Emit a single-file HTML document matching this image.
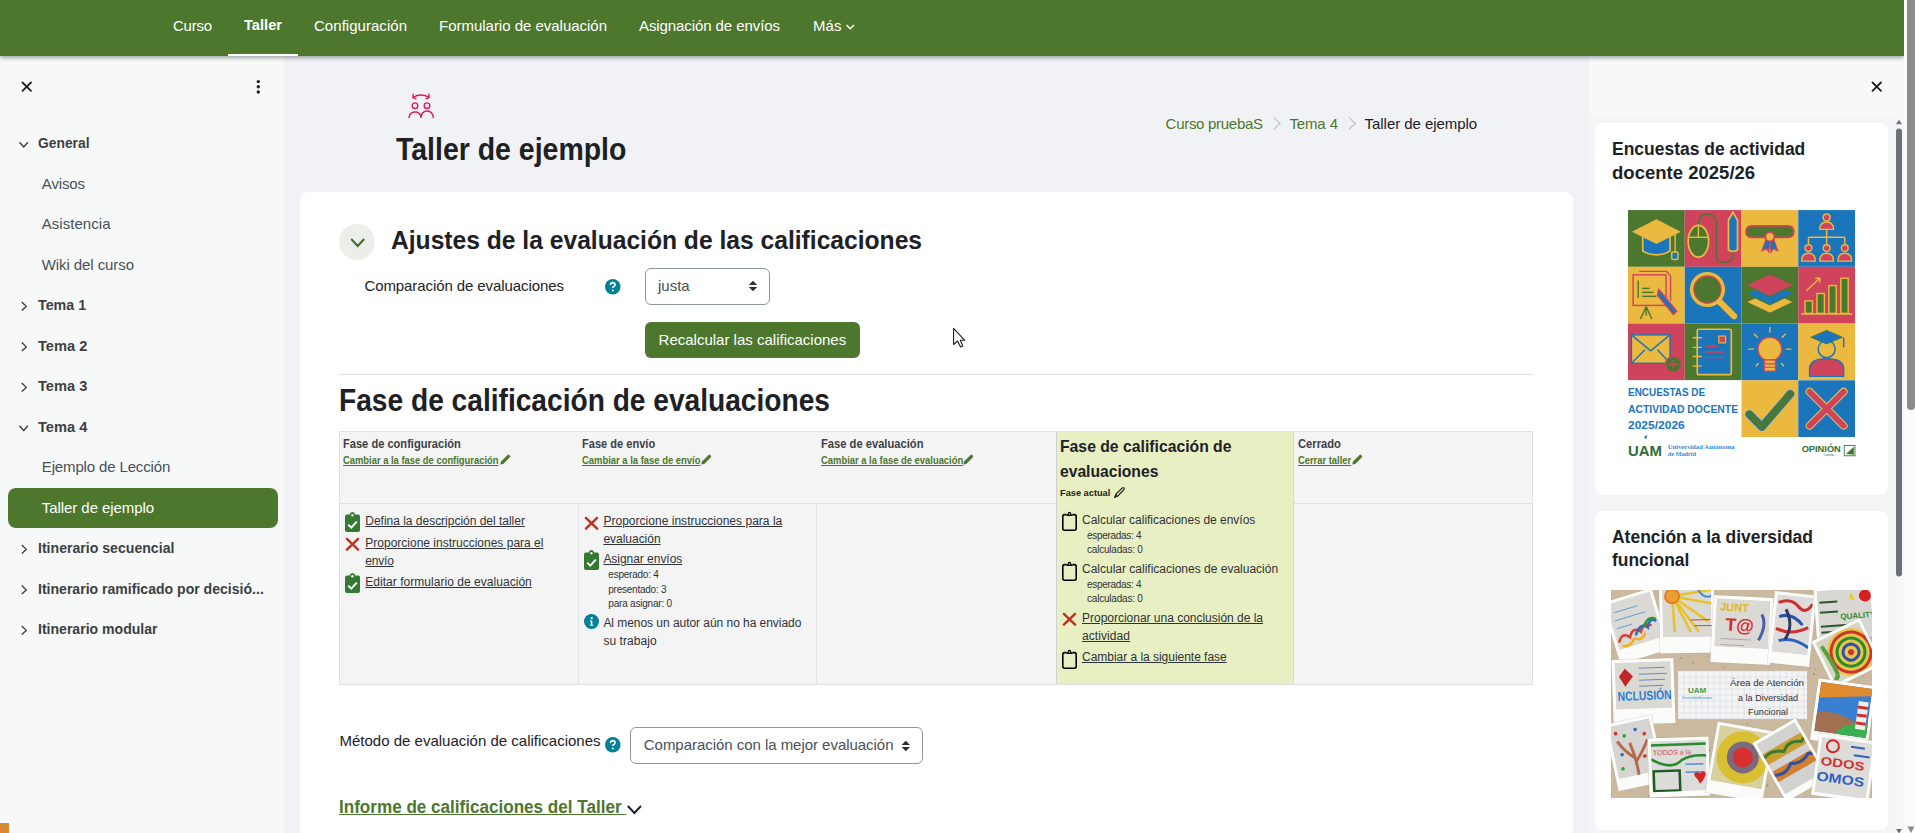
<!DOCTYPE html>
<html><head><meta charset="utf-8">
<style>
html,body{margin:0;padding:0;}
body{width:1915px;height:833px;overflow:hidden;position:relative;background:#f1f2f5;font-family:"Liberation Sans",sans-serif;}
.t{position:absolute;white-space:pre;z-index:10;}
svg.i{position:absolute;overflow:visible;z-index:11;}
.a{position:absolute;}
#nav{left:0;top:0;width:1904px;height:56px;background:#4c772c;box-shadow:0 2px 4px rgba(20,25,35,.38);z-index:5;}
#sb{left:1904px;top:0;width:11px;height:833px;background:#fbfbfb;z-index:6;}
#sbthumb{left:1907px;top:0;width:8px;height:410px;background:#8b8c8b;border-radius:0 0 4px 4px;z-index:7;}
#ldrawer{left:0;top:56px;width:284px;height:777px;background:#f7f9f8;}
#rdrawer{left:1589px;top:56px;width:315px;height:777px;background:#f7f9f8;}
#rscroll{left:1589px;top:117px;width:307px;height:716px;background:#f3f4f5;}
.card{background:#fff;border-radius:8px;}
</style></head><body>
<div id="nav" class="a"></div>
<div id="sb" class="a"></div>
<div id="sbthumb" class="a"></div>
<div id="ldrawer" class="a"></div>
<div id="rdrawer" class="a"></div>
<div id="rscroll" class="a"></div>
<!-- active nav underline -->
<div class="a" style="left:228px;top:53.8px;width:70px;height:2.2px;background:#fff;z-index:6"></div>
<!-- sidebar active -->
<div class="a" style="left:8px;top:488px;width:270px;height:40px;background:#4c772c;border-radius:8px"></div>
<!-- main card -->
<div class="a card" style="left:300px;top:192px;width:1273px;height:700px"></div>
<!-- right blocks -->
<div class="a card" style="left:1595px;top:123px;width:293px;height:372px"></div>
<div class="a card" style="left:1595px;top:511px;width:293px;height:319px"></div>
<!-- collapse circle -->
<div class="a" style="left:339px;top:224px;width:36px;height:36px;border-radius:50%;background:#eceee9"></div>
<!-- select 1 -->
<div class="a" style="left:645px;top:268px;width:123px;height:35px;border:1px solid #8f959e;border-radius:6px;background:#fff"></div>
<!-- button -->
<div class="a" style="left:645px;top:322px;width:215px;height:36px;background:#4c772c;border-radius:6px"></div>
<!-- hr -->
<div class="a" style="left:339px;top:374px;width:1194px;height:1px;background:#dee2e6"></div>
<!-- table -->
<div class="a" style="left:339px;top:431px;width:1192px;height:252px;border:1px solid #dee2e6;background:#f4f4f4"></div>
<div class="a" style="left:1056px;top:432px;width:236px;height:252px;background:#e7efc3;border-left:1px solid #cdd2d6;border-right:1px solid #d6dadd"></div>
<div class="a" style="left:340px;top:503px;width:716px;height:1px;background:#dee2e6"></div>
<div class="a" style="left:1294px;top:503px;width:238px;height:1px;background:#dee2e6"></div>
<div class="a" style="left:578px;top:504px;width:1px;height:180px;background:#dee2e6"></div>
<div class="a" style="left:816px;top:504px;width:1px;height:180px;background:#dee2e6"></div>
<!-- select 2 -->
<div class="a" style="left:630px;top:727px;width:291px;height:35px;border:1px solid #8f959e;border-radius:6px;background:#fff"></div>
<!-- orange square -->
<div class="a" style="left:0;top:823px;width:9px;height:10px;background:#d98a32"></div>

<!-- sidebar X and dots -->
<svg class="i" style="left:0;top:0" width="1" height="1"><g stroke="#1d2125" stroke-width="1.8" stroke-linecap="round"><line x1="22.5" y1="82.5" x2="31" y2="90.8"/><line x1="31" y1="82.5" x2="22.5" y2="90.8"/></g>
<g fill="#1d2125"><circle cx="258.3" cy="81.6" r="1.7"/><circle cx="258.3" cy="86.8" r="1.7"/><circle cx="258.3" cy="92" r="1.7"/></g></svg>
<!-- right drawer X -->
<svg class="i" style="left:0;top:0" width="1" height="1"><g stroke="#1d2125" stroke-width="1.8" stroke-linecap="round"><line x1="1872.5" y1="82.5" x2="1881" y2="90.8"/><line x1="1881" y1="82.5" x2="1872.5" y2="90.8"/></g></svg>
<!-- Mas chevron -->
<svg class="i" style="left:0;top:0;z-index:12" width="1" height="1"><polyline points="846.5,25 850.2,28.8 854,25" fill="none" stroke="#fff" stroke-width="1.5"/></svg>
<!-- page header icon -->
<svg class="i" style="left:402px;top:88px" width="38" height="34"><g fill="none" stroke="#d81b60" stroke-width="1.4" stroke-linecap="round">
<path d="M11.2,9.3 Q19,4.8 26.8,9.3"/><path d="M11.2,6.3 L10.8,9.6 L14,10.8"/><path d="M26.8,6.3 L27.2,9.6 L24,10.8"/>
<circle cx="13" cy="17.7" r="2.8"/><circle cx="25" cy="17.7" r="2.8"/>
<path d="M7,29.5 A6.1,6.3 0 0 1 19,29"/><path d="M19,29 A6.1,6.3 0 0 1 31.2,29.5"/></g></svg>
<!-- breadcrumb separators -->
<svg class="i" style="left:0;top:0" width="1" height="1"><g fill="none" stroke="#c3c8cc" stroke-width="1.4"><polyline points="1273.8,117.5 1280,123.4 1273.8,129.3"/><polyline points="1349,117.5 1355.3,123.4 1349,129.3"/></g></svg>
<!-- collapse chevron -->
<svg class="i" style="left:0;top:0" width="1" height="1"><polyline points="351.2,239 357.7,246 364.2,239" fill="none" stroke="#3f6a26" stroke-width="2"/></svg>
<!-- help icons -->
<svg class="i" style="left:604.5px;top:278.8px" width="15.5" height="15.5" viewBox="0 0 16 16"><circle cx="8" cy="8" r="8" fill="#008196"/><path d="M5.6,6.2 Q5.8,3.8 8.1,3.8 Q10.4,3.9 10.4,5.9 Q10.3,7.3 8.8,7.9 Q8,8.3 8,9.4" fill="none" stroke="#fff" stroke-width="1.7"/><circle cx="8" cy="11.9" r="1.05" fill="#fff"/></svg>
<svg class="i" style="left:604.5px;top:736.7px" width="15.5" height="15.5" viewBox="0 0 16 16"><circle cx="8" cy="8" r="8" fill="#008196"/><path d="M5.6,6.2 Q5.8,3.8 8.1,3.8 Q10.4,3.9 10.4,5.9 Q10.3,7.3 8.8,7.9 Q8,8.3 8,9.4" fill="none" stroke="#fff" stroke-width="1.7"/><circle cx="8" cy="11.9" r="1.05" fill="#fff"/></svg>
<!-- select arrows -->
<svg class="i" style="left:0;top:0" width="1" height="1"><g fill="#2b2f33"><path d="M748.8,285 L753,280.8 L757.2,285 Z"/><path d="M748.8,287 L753,291.2 L757.2,287 Z"/><path d="M901.6,745 L905.8,740.8 L910,745 Z"/><path d="M901.6,747 L905.8,751.2 L910,747 Z"/></g></svg>
<!-- informe chevron -->
<svg class="i" style="left:0;top:0" width="1" height="1"><polyline points="627.8,806 634.4,813 641,806" fill="none" stroke="#1d2125" stroke-width="1.9"/></svg>
<!-- cursor -->
<svg class="i" style="left:0;top:0;z-index:20" width="1" height="1"><path d="M953.6,328.3 L953.6,344.5 L957.6,341 L960.6,347 L962.8,346 L960.3,340.3 L964.8,340.3 Z" fill="#fff" stroke="#1d2125" stroke-width="1.1" stroke-linejoin="round"/></svg>
<!-- inner scrollbar -->
<svg class="i" style="left:0;top:0" width="1" height="1"><rect x="1896" y="128.5" width="6" height="448" rx="3" fill="#6a717b"/><path d="M1896,124.2 L1899,119.8 L1902,124.2 Z" fill="#6a717b"/><path d="M1896,829 L1899,833.5 L1902,829 Z" fill="#6a717b"/></svg>
<svg class="i" style="left:0;top:0;z-index:12" width="1" height="1"><path d="M1907.5,826.5 L1911,833 L1914.5,826.5 Z" fill="#8b8c8b"/></svg>
<svg class="i" style="left:0;top:0" width="1" height="1"><g fill="none" stroke="#343a40" stroke-width="1.3"><polyline points="19.5,142.2 23.7,147.0 27.9,142.2"/><polyline points="21.8,302.0 26.3,306.4 21.8,310.6"/><polyline points="21.8,342.5 26.3,346.9 21.8,351.1"/><polyline points="21.8,383.0 26.3,387.4 21.8,391.6"/><polyline points="19.5,425.7 23.7,430.5 27.9,425.7"/><polyline points="21.8,545.0 26.3,549.4 21.8,553.6"/><polyline points="21.8,585.5 26.3,589.9 21.8,594.1"/><polyline points="21.8,626.0 26.3,630.4 21.8,634.6"/></g></svg>
<svg class="i" style="left:345.1px;top:512px" width="15" height="20" viewBox="0 0 15 20"><path d="M1.8,2.6 H4.6 Q5.2,0 7.4,0 Q9.7,0 10.3,2.6 H13.2 Q15,2.6 15,4.4 V18.2 Q15,20 13.2,20 H1.8 Q0,20 0,18.2 V4.4 Q0,2.6 1.8,2.6 Z" fill="#357a32"/><circle cx="7.4" cy="3.3" r="1.2" fill="#f4f4f4"/><polyline points="3.2,12.6 6.3,15.6 11.8,9.6" fill="none" stroke="#fff" stroke-width="2"/></svg>
<svg class="i" style="left:346px;top:537.8px" width="13" height="12.5" viewBox="0 0 13 12.5"><g stroke="#c62d1f" stroke-width="2.4" stroke-linecap="round"><line x1="0.9" y1="0.9" x2="12.1" y2="11.6"/><line x1="12.1" y1="0.9" x2="0.9" y2="11.6"/></g></svg>
<svg class="i" style="left:345.1px;top:573.4px" width="15" height="20" viewBox="0 0 15 20"><path d="M1.8,2.6 H4.6 Q5.2,0 7.4,0 Q9.7,0 10.3,2.6 H13.2 Q15,2.6 15,4.4 V18.2 Q15,20 13.2,20 H1.8 Q0,20 0,18.2 V4.4 Q0,2.6 1.8,2.6 Z" fill="#357a32"/><circle cx="7.4" cy="3.3" r="1.2" fill="#f4f4f4"/><polyline points="3.2,12.6 6.3,15.6 11.8,9.6" fill="none" stroke="#fff" stroke-width="2"/></svg>
<svg class="i" style="left:584.6px;top:516.6px" width="13" height="12.5" viewBox="0 0 13 12.5"><g stroke="#c62d1f" stroke-width="2.4" stroke-linecap="round"><line x1="0.9" y1="0.9" x2="12.1" y2="11.6"/><line x1="12.1" y1="0.9" x2="0.9" y2="11.6"/></g></svg>
<svg class="i" style="left:584.2px;top:550px" width="15" height="20" viewBox="0 0 15 20"><path d="M1.8,2.6 H4.6 Q5.2,0 7.4,0 Q9.7,0 10.3,2.6 H13.2 Q15,2.6 15,4.4 V18.2 Q15,20 13.2,20 H1.8 Q0,20 0,18.2 V4.4 Q0,2.6 1.8,2.6 Z" fill="#357a32"/><circle cx="7.4" cy="3.3" r="1.2" fill="#f4f4f4"/><polyline points="3.2,12.6 6.3,15.6 11.8,9.6" fill="none" stroke="#fff" stroke-width="2"/></svg>
<svg class="i" style="left:584.2px;top:614.2px" width="15" height="15" viewBox="0 0 16 16"><circle cx="8" cy="8" r="8" fill="#008196"/><circle cx="8.2" cy="4.4" r="1.2" fill="#fff"/><path d="M6.3,7 H8.9 V11.4 H10 V12.5 H6.2 V11.4 H7.3 V8.1 H6.3 Z" fill="#fff"/></svg>
<svg class="i" style="left:1062px;top:511px" width="15" height="20" viewBox="0 0 15 20"><path d="M4.5,3.6 H2.6 Q0.8,3.6 0.8,5.4 V17.6 Q0.8,19.2 2.6,19.2 H12.4 Q14.2,19.2 14.2,17.6 V5.4 Q14.2,3.6 12.4,3.6 H10.5" fill="none" stroke="#000" stroke-width="1.6"/><path d="M4.4,4.9 V3.2 H5.6 Q5.9,0.8 7.5,0.8 Q9.1,0.8 9.4,3.2 H10.6 V4.9 Z" fill="#000"/><circle cx="7.5" cy="3" r="0.8" fill="#e8f0c4"/></svg>
<svg class="i" style="left:1062px;top:560.5px" width="15" height="20" viewBox="0 0 15 20"><path d="M4.5,3.6 H2.6 Q0.8,3.6 0.8,5.4 V17.6 Q0.8,19.2 2.6,19.2 H12.4 Q14.2,19.2 14.2,17.6 V5.4 Q14.2,3.6 12.4,3.6 H10.5" fill="none" stroke="#000" stroke-width="1.6"/><path d="M4.4,4.9 V3.2 H5.6 Q5.9,0.8 7.5,0.8 Q9.1,0.8 9.4,3.2 H10.6 V4.9 Z" fill="#000"/><circle cx="7.5" cy="3" r="0.8" fill="#e8f0c4"/></svg>
<svg class="i" style="left:1063.2px;top:612.8px" width="13" height="12.5" viewBox="0 0 13 12.5"><g stroke="#c62d1f" stroke-width="2.4" stroke-linecap="round"><line x1="0.9" y1="0.9" x2="12.1" y2="11.6"/><line x1="12.1" y1="0.9" x2="0.9" y2="11.6"/></g></svg>
<svg class="i" style="left:1062px;top:648.5px" width="15" height="20" viewBox="0 0 15 20"><path d="M4.5,3.6 H2.6 Q0.8,3.6 0.8,5.4 V17.6 Q0.8,19.2 2.6,19.2 H12.4 Q14.2,19.2 14.2,17.6 V5.4 Q14.2,3.6 12.4,3.6 H10.5" fill="none" stroke="#000" stroke-width="1.6"/><path d="M4.4,4.9 V3.2 H5.6 Q5.9,0.8 7.5,0.8 Q9.1,0.8 9.4,3.2 H10.6 V4.9 Z" fill="#000"/><circle cx="7.5" cy="3" r="0.8" fill="#e8f0c4"/></svg>
<svg class="i" style="left:500px;top:454.2px" width="11" height="11" viewBox="0 0 11 11"><path d="M0.2,10.6 L1,7.6 L7.6,1 Q8.4,0.2 9.2,1 L9.9,1.7 Q10.7,2.5 9.9,3.3 L3.3,9.9 Z" fill="#4c772c"/></svg>
<svg class="i" style="left:701px;top:454.2px" width="11" height="11" viewBox="0 0 11 11"><path d="M0.2,10.6 L1,7.6 L7.6,1 Q8.4,0.2 9.2,1 L9.9,1.7 Q10.7,2.5 9.9,3.3 L3.3,9.9 Z" fill="#4c772c"/></svg>
<svg class="i" style="left:963.2px;top:454.2px" width="11" height="11" viewBox="0 0 11 11"><path d="M0.2,10.6 L1,7.6 L7.6,1 Q8.4,0.2 9.2,1 L9.9,1.7 Q10.7,2.5 9.9,3.3 L3.3,9.9 Z" fill="#4c772c"/></svg>
<svg class="i" style="left:1351.6px;top:454.2px" width="11" height="11" viewBox="0 0 11 11"><path d="M0.2,10.6 L1,7.6 L7.6,1 Q8.4,0.2 9.2,1 L9.9,1.7 Q10.7,2.5 9.9,3.3 L3.3,9.9 Z" fill="#4c772c"/></svg>
<svg class="i" style="left:1114.2px;top:486.5px" width="11" height="11" viewBox="0 0 11 11"><path d="M0.6,10.4 L2,7 L8.4,0.9 Q9.2,0.3 9.9,1 Q10.6,1.8 9.9,2.6 L3.8,9 Z" fill="none" stroke="#1d2125" stroke-width="1.2" stroke-linejoin="round"/><path d="M0.6,10.4 L2.5,7.6 L3.6,8.6 Z" fill="#1d2125"/></svg>
<svg class="i" style="left:1628px;top:209.5px;z-index:3" width="227" height="247" viewBox="0 0 400 435">
<defs>
<g id="cG"><rect width="100" height="100" fill="#4b782e"/></g>
</defs>
<!-- cells -->
<rect x="0" y="0" width="100" height="100" fill="#4b782e"/>
<rect x="100" y="0" width="100" height="100" fill="#cf435c"/>
<rect x="200" y="0" width="100" height="100" fill="#ebb840"/>
<rect x="300" y="0" width="100" height="100" fill="#1b75bb"/>
<rect x="0" y="100" width="100" height="100" fill="#ebb840"/>
<rect x="100" y="100" width="100" height="100" fill="#1b75bb"/>
<rect x="200" y="100" width="100" height="100" fill="#4b782e"/>
<rect x="300" y="100" width="100" height="100" fill="#cf435c"/>
<rect x="0" y="200" width="100" height="100" fill="#cf435c"/>
<rect x="100" y="200" width="100" height="100" fill="#4b782e"/>
<rect x="200" y="200" width="100" height="100" fill="#1b75bb"/>
<rect x="300" y="200" width="100" height="100" fill="#ebb840"/>
<rect x="0" y="300" width="200" height="135" fill="#ffffff"/>
<rect x="200" y="300" width="100" height="100" fill="#ebb840"/>
<rect x="300" y="300" width="100" height="100" fill="#1b75bb"/>
<rect x="200" y="400" width="200" height="35" fill="#ffffff"/>
<!-- mortarboard -->
<g>
<path d="M26,45 V72 Q50,86 74,72 V45 Z" fill="#1b75bb" stroke="#ebb840" stroke-width="3"/>
<path d="M7,38 L50,16 L93,38 L50,60 Z" fill="#ebb840"/>
<line x1="83" y1="42" x2="83" y2="76" stroke="#ebb840" stroke-width="2.5"/>
<rect x="77" y="74" width="11" height="13" rx="2" fill="#1b75bb" stroke="#ebb840" stroke-width="2.5"/>
</g>
<!-- mouse + pencil -->
<g transform="translate(100,0)">
<path d="M24,27 Q24,7 40,7 Q56,7 56,27 V85 Q56,92 70,92 Q85,92 85,80 V72" fill="none" stroke="#4b782e" stroke-width="2.5"/>
<ellipse cx="24" cy="55" rx="18" ry="28" fill="#4b782e" stroke="#ebb840" stroke-width="3"/>
<line x1="7" y1="48" x2="41" y2="48" stroke="#ebb840" stroke-width="2.5"/>
<line x1="24" y1="28" x2="24" y2="48" stroke="#ebb840" stroke-width="2.5"/>
<path d="M77,18 L85,4 L93,18 V70 Q85,76 77,70 Z" fill="#1b75bb" stroke="#ebb840" stroke-width="3"/>
</g>
<!-- diploma -->
<g transform="translate(200,0)">
<rect x="8" y="28" width="84" height="20" rx="9" fill="#4b782e" stroke="#cf435c" stroke-width="3"/>
<path d="M43,52 L36,72 L44,68 L48,74 L50,55 Z" fill="#1b75bb" stroke="#cf435c" stroke-width="2"/>
<path d="M57,52 L64,72 L56,68 L52,74 L50,55 Z" fill="#1b75bb" stroke="#cf435c" stroke-width="2"/>
<circle cx="50" cy="47" r="8" fill="#ebb840" stroke="#cf435c" stroke-width="3"/>
</g>
<!-- org chart -->
<g transform="translate(300,0)" fill="#cf435c" stroke="#ebb840" stroke-width="2.5">
<circle cx="50" cy="13" r="6"/>
<path d="M38,34 Q38,21 50,21 Q62,21 62,34 Z"/>
<path d="M50,35 V48 M18,48 H82 M18,48 V62 M50,48 V62 M82,48 V62" fill="none"/>
<circle cx="18" cy="67" r="6"/><path d="M6,90 Q6,76 18,76 Q30,76 30,90 Z"/>
<circle cx="50" cy="67" r="6"/><path d="M38,90 Q38,76 50,76 Q62,76 62,90 Z"/>
<circle cx="82" cy="67" r="6"/><path d="M70,90 Q70,76 82,76 Q94,76 94,90 Z"/>
</g>
<!-- presentation -->
<g transform="translate(0,100)">
<path d="M20,8 H68 L75,16 V60" fill="none" stroke="#cf435c" stroke-width="2.5"/>
<rect x="9" y="14" width="58" height="54" fill="#ebb840" stroke="#cf435c" stroke-width="2.5"/>
<line x1="18" y1="24" x2="18" y2="55" stroke="#4b782e" stroke-width="2.5"/>
<line x1="25" y1="38" x2="38" y2="38" stroke="#4b782e" stroke-width="2.5"/>
<line x1="25" y1="45" x2="45" y2="45" stroke="#4b782e" stroke-width="2.5"/>
<line x1="25" y1="52" x2="50" y2="52" stroke="#4b782e" stroke-width="2.5"/>
<path d="M22,92 L32,70 M42,92 L32,70 M32,70 V86" stroke="#4b782e" stroke-width="2.5" fill="none"/>
<path d="M58,44 L86,78 L80,84 L52,50 L54,40 Z" fill="#1b75bb" stroke="#cf435c" stroke-width="2.5"/>
</g>
<!-- magnifier -->
<g transform="translate(100,100)">
<line x1="62" y1="62" x2="87" y2="87" stroke="#ebb840" stroke-width="11" stroke-linecap="round"/>
<circle cx="40" cy="40" r="31" fill="#ebb840"/>
<circle cx="40" cy="40" r="24" fill="#4b782e" stroke="#cf435c" stroke-width="2"/>
</g>
<!-- layers -->
<g transform="translate(200,100)" stroke-width="2">
<path d="M8,62 L50,42 L92,62 L50,82 Z" fill="#ebb840" stroke="#4b782e"/>
<path d="M8,47 L50,27 L92,47 L50,67 Z" fill="#1b75bb" stroke="#4b782e"/>
<path d="M8,32 L50,12 L92,32 L50,52 Z" fill="#cf435c" stroke="#4b782e"/>
</g>
<!-- bar chart -->
<g transform="translate(300,100)" fill="#4b782e" stroke="#ebb840" stroke-width="2.5">
<rect x="12" y="60" width="13" height="22"/>
<rect x="33" y="47" width="13" height="35"/>
<rect x="54" y="33" width="13" height="49"/>
<rect x="75" y="20" width="13" height="62"/>
<line x1="5" y1="83" x2="95" y2="83"/>
<path d="M14,42 L38,20 M30,20 H38 V28" fill="none"/>
</g>
<!-- envelope -->
<g transform="translate(0,200)">
<rect x="6" y="20" width="68" height="50" fill="#ebb840" stroke="#1b75bb" stroke-width="2.5"/>
<path d="M6,20 L40,48 L74,20 M6,70 L30,46 M74,70 L52,46" fill="none" stroke="#1b75bb" stroke-width="2.5"/>
<circle cx="80" cy="72" r="14" fill="#4b782e" stroke="#cf435c" stroke-width="2.5"/>
<path d="M80,64 V80 M72,72 H88" stroke="#cf435c" stroke-width="2.5"/>
</g>
<!-- notebook -->
<g transform="translate(100,200)">
<rect x="22" y="10" width="60" height="80" rx="3" fill="#1b75bb" stroke="#ebb840" stroke-width="3"/>
<path d="M14,25 H30 M14,42 H30 M14,58 H30 M14,75 H30" stroke="#ebb840" stroke-width="2.5"/>
<rect x="60" y="22" width="12" height="12" fill="#cf435c" stroke="#ebb840" stroke-width="2"/>
<path d="M36,40 H58 M36,50 H70 M36,60 H70" stroke="#cf435c" stroke-width="2.5"/>
</g>
<!-- lightbulb -->
<g transform="translate(200,200)">
<path d="M50,6 V16 M22,18 L29,25 M78,18 L71,25 M12,45 H22 M78,45 H88 M25,75 L30,70 M75,75 L70,70" stroke="#ebb840" stroke-width="2.5"/>
<circle cx="50" cy="45" r="21" fill="#ebb840" stroke="#cf435c" stroke-width="2.5"/>
<rect x="40" y="64" width="20" height="20" fill="#ebb840" stroke="#cf435c" stroke-width="2.5"/>
<path d="M40,71 H60 M40,77 H60" stroke="#cf435c" stroke-width="2"/>
</g>
<!-- person -->
<g transform="translate(300,200)">
<path d="M20,93 V80 Q20,62 50,62 Q80,62 80,80 V93 Z" fill="#cf435c" stroke="#1b75bb" stroke-width="2.5"/>
<circle cx="50" cy="45" r="15" fill="#ebb840" stroke="#1b75bb" stroke-width="2.5"/>
<path d="M22,24 L50,12 L78,24 L50,36 Z" fill="#1b75bb" stroke="#4b782e" stroke-width="1.5"/>
<path d="M80,25 V42" stroke="#1b75bb" stroke-width="2.5"/>
</g>
<!-- check -->
<g transform="translate(200,300)">
<path d="M14,60 L36,82 L86,24" fill="none" stroke="#1b75bb" stroke-width="14" stroke-linecap="round" stroke-linejoin="round"/>
<path d="M14,60 L36,82 L86,24" fill="none" stroke="#4b782e" stroke-width="10" stroke-linecap="round" stroke-linejoin="round"/>
</g>
<!-- X -->
<g transform="translate(300,300)">
<path d="M20,20 L80,80 M80,20 L20,80" fill="none" stroke="#ebb840" stroke-width="14" stroke-linecap="round"/>
<path d="M20,20 L80,80 M80,20 L20,80" fill="none" stroke="#cf435c" stroke-width="10" stroke-linecap="round"/>
</g>
<!-- text -->
<g fill="#1b75bb" font-family="Liberation Sans" font-weight="700" font-size="20.5">
<text x="0" y="328" textLength="136" lengthAdjust="spacingAndGlyphs">ENCUESTAS DE</text>
<text x="0" y="357" textLength="194" lengthAdjust="spacingAndGlyphs">ACTIVIDAD DOCENTE</text>
<text x="0" y="386" textLength="100" lengthAdjust="spacingAndGlyphs">2025/2026</text>
</g>
<!-- footer logos -->
<g>
<text x="0" y="433" font-family="Liberation Sans" font-weight="700" font-size="27" fill="#2f6e35" textLength="60" lengthAdjust="spacingAndGlyphs">UAM</text>
<path d="M28,400 L34,396 L32,404 Z" fill="#1b75bb"/>
<text x="70" y="421" font-family="Liberation Serif" font-weight="700" font-size="12" fill="#3d8ad0" textLength="118" lengthAdjust="spacingAndGlyphs">Universidad Autónoma</text>
<text x="70" y="433" font-family="Liberation Serif" font-weight="700" font-size="12" fill="#3d8ad0" textLength="50" lengthAdjust="spacingAndGlyphs">de Madrid</text>
<text x="306" y="426" font-family="Liberation Sans" font-weight="700" font-size="15" fill="#2f6e35" textLength="69" lengthAdjust="spacingAndGlyphs">OPINIÓN</text>
<text x="345" y="434" font-family="Liberation Sans" font-size="6" fill="#2f6e35">cuenta</text>
<rect x="381" y="415" width="19" height="18" fill="none" stroke="#2f6e35" stroke-width="1.5"/>
<path d="M384,430 L398,417 V431 Z" fill="#3f7a35"/>
</g>
</svg>
<svg class="i" style="left:1611px;top:590px;z-index:3" width="261" height="208" viewBox="0 0 261 208"><defs><clipPath id="cl2"><rect width="261" height="208"/></clipPath></defs><g clip-path="url(#cl2)"><rect x="0" y="0" width="261" height="208" fill="#cab99e"/><circle cx="62.1" cy="113.2" r="1.0" fill="#b3a38a"/><circle cx="123.7" cy="120.8" r="1.0" fill="#a89880"/><circle cx="122.5" cy="114.6" r="1.1" fill="#d8cab0"/><circle cx="122.7" cy="174.0" r="0.7" fill="#9a8e80"/><circle cx="224.7" cy="48.2" r="1.0" fill="#d8cab0"/><circle cx="136.6" cy="154.2" r="0.5" fill="#a89880"/><circle cx="249.9" cy="8.9" r="1.0" fill="#a89880"/><circle cx="70.3" cy="123.7" r="0.9" fill="#9a8e80"/><circle cx="240.4" cy="82.2" r="1.1" fill="#9a8e80"/><circle cx="35.0" cy="76.0" r="0.5" fill="#a89880"/><circle cx="56.6" cy="200.8" r="0.9" fill="#9a8e80"/><circle cx="223.2" cy="87.6" r="0.8" fill="#9a8e80"/><circle cx="139.4" cy="84.8" r="1.0" fill="#d8cab0"/><circle cx="178.0" cy="193.2" r="1.1" fill="#b3a38a"/><circle cx="175.2" cy="33.9" r="1.1" fill="#b3a38a"/><circle cx="236.1" cy="118.4" r="0.8" fill="#d8cab0"/><circle cx="257.9" cy="55.6" r="0.4" fill="#a89880"/><circle cx="222.9" cy="205.9" r="0.6" fill="#a89880"/><circle cx="17.4" cy="186.6" r="0.6" fill="#a89880"/><circle cx="200.7" cy="181.5" r="0.8" fill="#a89880"/><circle cx="198.8" cy="78.6" r="0.8" fill="#b3a38a"/><circle cx="240.6" cy="58.0" r="1.1" fill="#d8cab0"/><circle cx="80.8" cy="16.0" r="1.1" fill="#a89880"/><circle cx="253.5" cy="60.7" r="0.5" fill="#b3a38a"/><circle cx="11.1" cy="180.5" r="0.7" fill="#b3a38a"/><circle cx="36.1" cy="179.2" r="0.7" fill="#9a8e80"/><circle cx="135.7" cy="133.9" r="0.8" fill="#a89880"/><circle cx="245.5" cy="105.5" r="0.8" fill="#9a8e80"/><circle cx="186.8" cy="194.8" r="1.1" fill="#9a8e80"/><circle cx="136.0" cy="114.1" r="1.0" fill="#a89880"/><circle cx="257.7" cy="65.5" r="0.8" fill="#9a8e80"/><circle cx="165.0" cy="12.5" r="0.7" fill="#b3a38a"/><circle cx="177.3" cy="73.3" r="0.9" fill="#b3a38a"/><circle cx="5.8" cy="12.6" r="1.1" fill="#a89880"/><circle cx="65.5" cy="94.9" r="0.5" fill="#b3a38a"/><circle cx="48.3" cy="157.7" r="0.6" fill="#b3a38a"/><circle cx="98.4" cy="160.6" r="1.1" fill="#a89880"/><circle cx="178.5" cy="27.3" r="0.9" fill="#d8cab0"/><circle cx="70.3" cy="68.2" r="0.9" fill="#9a8e80"/><circle cx="25.3" cy="125.0" r="0.9" fill="#b3a38a"/><circle cx="58.6" cy="168.4" r="0.5" fill="#d8cab0"/><circle cx="193.7" cy="45.3" r="0.6" fill="#9a8e80"/><circle cx="205.4" cy="7.1" r="0.6" fill="#d8cab0"/><circle cx="218.2" cy="119.6" r="0.6" fill="#b3a38a"/><circle cx="216.1" cy="17.8" r="0.8" fill="#b3a38a"/><circle cx="110.0" cy="107.8" r="0.7" fill="#b3a38a"/><circle cx="165.5" cy="60.4" r="0.4" fill="#9a8e80"/><circle cx="107.9" cy="41.5" r="1.1" fill="#9a8e80"/><circle cx="229.7" cy="205.3" r="0.8" fill="#9a8e80"/><circle cx="257.3" cy="149.2" r="0.9" fill="#a89880"/><circle cx="218.4" cy="137.9" r="0.8" fill="#b3a38a"/><circle cx="232.2" cy="179.2" r="0.5" fill="#b3a38a"/><circle cx="63.8" cy="7.3" r="1.0" fill="#d8cab0"/><circle cx="234.8" cy="120.0" r="0.7" fill="#a89880"/><circle cx="31.5" cy="104.7" r="0.9" fill="#d8cab0"/><circle cx="137.0" cy="86.1" r="0.6" fill="#a89880"/><circle cx="65.9" cy="179.2" r="1.0" fill="#9a8e80"/><circle cx="16.0" cy="45.9" r="0.8" fill="#a89880"/><circle cx="213.2" cy="35.6" r="1.0" fill="#b3a38a"/><circle cx="210.4" cy="171.3" r="0.7" fill="#a89880"/><circle cx="149.0" cy="83.3" r="0.6" fill="#b3a38a"/><circle cx="161.3" cy="108.1" r="0.7" fill="#a89880"/><circle cx="202.7" cy="0.4" r="0.9" fill="#a89880"/><circle cx="12.1" cy="10.4" r="1.1" fill="#9a8e80"/><circle cx="223.0" cy="17.9" r="0.6" fill="#9a8e80"/><circle cx="82.1" cy="73.1" r="0.8" fill="#9a8e80"/><circle cx="94.2" cy="39.7" r="0.7" fill="#b3a38a"/><circle cx="33.3" cy="0.7" r="1.0" fill="#9a8e80"/><circle cx="147.9" cy="8.9" r="0.8" fill="#9a8e80"/><circle cx="204.3" cy="79.1" r="0.8" fill="#a89880"/><circle cx="112.6" cy="77.5" r="0.9" fill="#9a8e80"/><circle cx="82.2" cy="197.7" r="0.7" fill="#9a8e80"/><circle cx="64.0" cy="111.5" r="1.0" fill="#a89880"/><circle cx="58.6" cy="27.1" r="1.1" fill="#a89880"/><circle cx="97.7" cy="186.8" r="0.5" fill="#b3a38a"/><circle cx="180.2" cy="195.3" r="0.9" fill="#9a8e80"/><circle cx="191.5" cy="117.3" r="1.0" fill="#a89880"/><circle cx="187.0" cy="98.5" r="0.9" fill="#d8cab0"/><circle cx="11.6" cy="19.1" r="0.9" fill="#a89880"/><circle cx="98.1" cy="170.4" r="1.0" fill="#b3a38a"/><circle cx="31.7" cy="175.5" r="1.0" fill="#9a8e80"/><circle cx="248.6" cy="120.4" r="0.4" fill="#a89880"/><circle cx="200.3" cy="106.4" r="0.5" fill="#d8cab0"/><circle cx="195.5" cy="194.4" r="0.8" fill="#a89880"/><circle cx="226.9" cy="37.5" r="0.6" fill="#a89880"/><circle cx="46.9" cy="52.0" r="0.6" fill="#9a8e80"/><circle cx="156.5" cy="195.3" r="1.1" fill="#9a8e80"/><circle cx="98.0" cy="48.9" r="1.0" fill="#9a8e80"/><circle cx="252.4" cy="86.4" r="0.5" fill="#9a8e80"/><circle cx="104.7" cy="184.6" r="0.5" fill="#d8cab0"/><circle cx="195.3" cy="190.7" r="0.8" fill="#9a8e80"/><circle cx="224.0" cy="28.3" r="0.5" fill="#d8cab0"/><circle cx="134.6" cy="194.4" r="0.9" fill="#b3a38a"/><circle cx="223.2" cy="123.8" r="1.0" fill="#b3a38a"/><circle cx="80.2" cy="55.8" r="0.5" fill="#9a8e80"/><circle cx="148.7" cy="49.7" r="0.9" fill="#9a8e80"/><circle cx="37.5" cy="206.2" r="0.9" fill="#9a8e80"/><circle cx="53.7" cy="120.7" r="0.7" fill="#a89880"/><circle cx="188.1" cy="178.2" r="0.9" fill="#9a8e80"/><circle cx="230.2" cy="9.5" r="1.0" fill="#d8cab0"/><circle cx="169.2" cy="161.7" r="1.1" fill="#a89880"/><circle cx="222.9" cy="50.4" r="0.9" fill="#d8cab0"/><circle cx="35.9" cy="129.4" r="1.0" fill="#a89880"/><circle cx="66.6" cy="179.9" r="0.5" fill="#b3a38a"/><circle cx="23.7" cy="166.2" r="0.5" fill="#a89880"/><circle cx="217.7" cy="60.7" r="0.7" fill="#b3a38a"/><circle cx="191.6" cy="70.0" r="0.6" fill="#a89880"/><circle cx="113.9" cy="101.1" r="0.9" fill="#d8cab0"/><circle cx="193.8" cy="101.9" r="0.8" fill="#d8cab0"/><circle cx="31.1" cy="57.2" r="0.5" fill="#9a8e80"/><circle cx="231.6" cy="189.0" r="0.8" fill="#a89880"/><circle cx="182.9" cy="141.1" r="0.9" fill="#b3a38a"/><circle cx="77.1" cy="140.6" r="0.5" fill="#b3a38a"/><circle cx="246.5" cy="70.4" r="0.9" fill="#a89880"/><circle cx="132.8" cy="12.4" r="0.9" fill="#b3a38a"/><circle cx="147.8" cy="37.9" r="0.5" fill="#d8cab0"/><circle cx="232.3" cy="136.3" r="0.5" fill="#a89880"/><circle cx="146.1" cy="191.5" r="0.8" fill="#9a8e80"/><circle cx="169.0" cy="95.2" r="0.9" fill="#b3a38a"/><circle cx="184.1" cy="22.3" r="0.9" fill="#d8cab0"/><circle cx="141.8" cy="153.8" r="0.5" fill="#b3a38a"/><circle cx="70.7" cy="11.1" r="0.4" fill="#d8cab0"/><circle cx="131.7" cy="51.4" r="1.0" fill="#b3a38a"/><circle cx="246.7" cy="93.2" r="0.6" fill="#a89880"/><circle cx="221.0" cy="23.3" r="0.8" fill="#b3a38a"/><circle cx="177.9" cy="117.4" r="0.5" fill="#a89880"/><circle cx="49.4" cy="86.7" r="1.0" fill="#9a8e80"/><circle cx="195.4" cy="123.1" r="1.0" fill="#d8cab0"/><circle cx="208.3" cy="113.3" r="0.8" fill="#d8cab0"/><circle cx="52.7" cy="52.0" r="0.4" fill="#b3a38a"/><circle cx="209.6" cy="185.4" r="0.6" fill="#9a8e80"/><circle cx="236.5" cy="64.4" r="1.1" fill="#9a8e80"/><circle cx="179.2" cy="62.3" r="0.4" fill="#9a8e80"/><circle cx="49.7" cy="131.9" r="0.9" fill="#a89880"/><circle cx="172.8" cy="102.3" r="0.5" fill="#9a8e80"/><circle cx="204.1" cy="44.1" r="0.5" fill="#9a8e80"/><circle cx="73.9" cy="136.8" r="0.5" fill="#d8cab0"/><circle cx="206.8" cy="129.6" r="0.4" fill="#a89880"/><circle cx="161.4" cy="105.2" r="0.8" fill="#9a8e80"/><circle cx="242.7" cy="67.2" r="0.9" fill="#b3a38a"/><circle cx="35.1" cy="178.5" r="0.9" fill="#a89880"/><circle cx="193.1" cy="71.5" r="1.1" fill="#d8cab0"/><circle cx="224.8" cy="90.9" r="0.7" fill="#d8cab0"/><circle cx="28.5" cy="8.9" r="1.0" fill="#a89880"/><circle cx="184.2" cy="81.4" r="0.9" fill="#9a8e80"/><circle cx="140.3" cy="87.8" r="0.6" fill="#9a8e80"/><circle cx="121.2" cy="157.5" r="0.7" fill="#9a8e80"/><circle cx="118.9" cy="7.7" r="0.7" fill="#b3a38a"/><circle cx="96.8" cy="110.1" r="0.6" fill="#9a8e80"/><circle cx="0.7" cy="43.5" r="0.5" fill="#b3a38a"/><circle cx="120.1" cy="40.6" r="0.4" fill="#d8cab0"/><circle cx="152.6" cy="104.8" r="0.5" fill="#a89880"/><circle cx="158.9" cy="92.1" r="0.4" fill="#d8cab0"/><circle cx="5.9" cy="93.2" r="0.4" fill="#9a8e80"/><circle cx="186.4" cy="49.8" r="0.7" fill="#a89880"/><circle cx="7.0" cy="200.8" r="0.6" fill="#d8cab0"/><circle cx="101.6" cy="39.7" r="0.8" fill="#b3a38a"/><circle cx="90.4" cy="25.8" r="1.0" fill="#a89880"/><circle cx="75.9" cy="204.1" r="1.0" fill="#9a8e80"/><circle cx="251.0" cy="101.6" r="0.4" fill="#b3a38a"/><circle cx="87.9" cy="206.5" r="0.5" fill="#b3a38a"/><circle cx="178.1" cy="201.6" r="0.5" fill="#a89880"/><circle cx="177.7" cy="4.0" r="0.7" fill="#a89880"/><circle cx="49.4" cy="106.0" r="0.5" fill="#b3a38a"/><circle cx="254.2" cy="99.2" r="1.0" fill="#9a8e80"/><circle cx="245.4" cy="7.1" r="0.9" fill="#b3a38a"/><circle cx="164.8" cy="82.0" r="0.5" fill="#b3a38a"/><circle cx="107.8" cy="105.6" r="0.8" fill="#b3a38a"/><circle cx="203.1" cy="83.8" r="1.0" fill="#9a8e80"/><circle cx="144.4" cy="192.1" r="1.0" fill="#b3a38a"/><circle cx="114.4" cy="92.5" r="0.6" fill="#9a8e80"/><circle cx="214.3" cy="105.5" r="1.1" fill="#9a8e80"/><circle cx="11.2" cy="35.7" r="1.0" fill="#a89880"/><circle cx="24.0" cy="143.9" r="0.6" fill="#a89880"/><circle cx="156.8" cy="166.7" r="1.0" fill="#a89880"/><circle cx="227.7" cy="93.6" r="1.1" fill="#b3a38a"/><circle cx="0.4" cy="40.5" r="0.6" fill="#a89880"/><circle cx="81.3" cy="93.7" r="0.6" fill="#d8cab0"/><circle cx="12.7" cy="31.8" r="0.8" fill="#d8cab0"/><circle cx="3.0" cy="47.8" r="0.6" fill="#d8cab0"/><circle cx="146.8" cy="87.3" r="1.0" fill="#b3a38a"/><circle cx="139.7" cy="39.1" r="0.8" fill="#d8cab0"/><circle cx="10.8" cy="167.7" r="1.0" fill="#a89880"/><circle cx="26.5" cy="196.2" r="0.5" fill="#b3a38a"/><circle cx="121.4" cy="46.3" r="0.8" fill="#a89880"/><circle cx="198.7" cy="181.3" r="0.7" fill="#b3a38a"/><circle cx="172.5" cy="161.8" r="1.0" fill="#b3a38a"/><circle cx="155.1" cy="169.5" r="0.5" fill="#d8cab0"/><circle cx="2.0" cy="62.3" r="0.6" fill="#a89880"/><circle cx="50.1" cy="156.7" r="0.7" fill="#b3a38a"/><circle cx="169.2" cy="126.0" r="0.6" fill="#d8cab0"/><circle cx="218.7" cy="13.0" r="0.7" fill="#d8cab0"/><circle cx="22.0" cy="45.3" r="0.9" fill="#d8cab0"/><circle cx="54.0" cy="45.5" r="1.1" fill="#9a8e80"/><circle cx="139.8" cy="87.1" r="1.0" fill="#d8cab0"/><circle cx="247.8" cy="100.7" r="0.7" fill="#9a8e80"/><circle cx="153.4" cy="7.3" r="0.5" fill="#a89880"/><circle cx="25.0" cy="150.3" r="0.8" fill="#b3a38a"/><circle cx="16.0" cy="98.2" r="0.9" fill="#d8cab0"/><circle cx="72.0" cy="89.9" r="0.7" fill="#b3a38a"/><circle cx="51.3" cy="162.7" r="0.5" fill="#d8cab0"/><circle cx="78.1" cy="85.5" r="0.5" fill="#a89880"/><circle cx="127.2" cy="168.5" r="1.1" fill="#b3a38a"/><circle cx="255.7" cy="182.2" r="1.1" fill="#b3a38a"/><circle cx="112.6" cy="195.5" r="0.8" fill="#9a8e80"/><circle cx="141.5" cy="74.8" r="0.6" fill="#b3a38a"/><circle cx="120.9" cy="184.5" r="0.9" fill="#b3a38a"/><circle cx="242.8" cy="108.1" r="0.5" fill="#a89880"/><circle cx="138.6" cy="111.5" r="1.1" fill="#d8cab0"/><circle cx="0.5" cy="204.6" r="0.6" fill="#9a8e80"/><circle cx="252.0" cy="75.5" r="0.7" fill="#a89880"/><circle cx="62.3" cy="57.6" r="1.0" fill="#b3a38a"/><circle cx="157.5" cy="168.7" r="0.6" fill="#9a8e80"/><circle cx="64.5" cy="166.8" r="0.9" fill="#9a8e80"/><circle cx="88.6" cy="6.1" r="0.8" fill="#a89880"/><circle cx="176.2" cy="189.8" r="1.1" fill="#d8cab0"/><circle cx="194.1" cy="175.0" r="0.8" fill="#9a8e80"/><circle cx="216.9" cy="114.8" r="0.4" fill="#b3a38a"/><circle cx="11.8" cy="101.1" r="1.0" fill="#a89880"/><circle cx="236.5" cy="97.2" r="0.7" fill="#9a8e80"/><circle cx="165.0" cy="61.1" r="0.9" fill="#a89880"/><circle cx="258.9" cy="113.8" r="0.9" fill="#9a8e80"/><circle cx="115.9" cy="57.9" r="0.7" fill="#b3a38a"/><circle cx="250.4" cy="32.3" r="0.5" fill="#b3a38a"/><circle cx="9.9" cy="101.0" r="1.0" fill="#d8cab0"/><circle cx="243.1" cy="127.4" r="0.6" fill="#a89880"/><circle cx="156.0" cy="24.1" r="0.6" fill="#d8cab0"/><circle cx="185.2" cy="189.6" r="0.7" fill="#a89880"/><circle cx="19.8" cy="7.0" r="1.0" fill="#9a8e80"/><circle cx="250.6" cy="133.9" r="0.6" fill="#d8cab0"/><circle cx="90.3" cy="136.0" r="0.6" fill="#9a8e80"/><circle cx="70.7" cy="197.6" r="0.6" fill="#b3a38a"/><circle cx="102.5" cy="58.6" r="0.7" fill="#d8cab0"/><circle cx="107.9" cy="187.1" r="0.6" fill="#9a8e80"/><circle cx="52.2" cy="16.5" r="0.9" fill="#a89880"/><circle cx="218.8" cy="131.3" r="1.1" fill="#a89880"/><circle cx="254.3" cy="143.9" r="0.6" fill="#9a8e80"/><circle cx="126.0" cy="55.7" r="0.5" fill="#a89880"/><circle cx="127.0" cy="35.0" r="1.0" fill="#d8cab0"/><circle cx="46.4" cy="206.5" r="0.9" fill="#9a8e80"/><circle cx="37.1" cy="11.4" r="0.6" fill="#d8cab0"/><circle cx="169.3" cy="27.2" r="0.4" fill="#d8cab0"/><circle cx="250.8" cy="111.2" r="0.9" fill="#9a8e80"/><circle cx="113.1" cy="37.8" r="0.6" fill="#a89880"/><circle cx="34.3" cy="30.2" r="0.7" fill="#d8cab0"/><circle cx="244.8" cy="125.6" r="0.4" fill="#d8cab0"/><circle cx="96.8" cy="29.6" r="0.6" fill="#9a8e80"/><circle cx="92.5" cy="197.8" r="0.5" fill="#9a8e80"/><circle cx="221.0" cy="98.3" r="0.8" fill="#b3a38a"/><circle cx="222.9" cy="92.0" r="0.7" fill="#9a8e80"/><circle cx="140.5" cy="92.0" r="1.0" fill="#9a8e80"/><circle cx="52.3" cy="123.6" r="0.6" fill="#d8cab0"/><circle cx="224.1" cy="199.5" r="0.6" fill="#b3a38a"/><circle cx="52.8" cy="11.0" r="0.7" fill="#a89880"/><circle cx="227.8" cy="23.8" r="0.5" fill="#a89880"/><circle cx="32.0" cy="83.9" r="0.8" fill="#b3a38a"/><circle cx="199.9" cy="19.2" r="0.6" fill="#9a8e80"/><circle cx="154.1" cy="45.5" r="0.8" fill="#9a8e80"/><circle cx="97.5" cy="66.2" r="0.9" fill="#b3a38a"/><circle cx="201.2" cy="150.4" r="1.0" fill="#b3a38a"/><g transform="translate(25,36) rotate(-17)"><rect x="-26.5" y="-32.5" width="53" height="65" fill="#9c9080" opacity="0.35"/><rect x="-26.0" y="-32.0" width="52" height="64" fill="#fbfbfa"/><svg x="-23.0" y="-29.0" width="46" height="47.36" viewBox="0 0 46 47.36" preserveAspectRatio="none"><rect width="100%" height="100%" fill="#dad9d4"/><path d="M2,40 Q8,30 14,38 Q20,28 26,36 Q32,26 38,33" fill="none" stroke="#e03b2e" stroke-width="2.5"/><path d="M4,44 Q12,48 18,40 M18,40 Q24,46 30,38" fill="none" stroke="#f0b020" stroke-width="2.5"/><path d="M20,38 Q28,26 34,34 Q38,24 44,30" fill="none" stroke="#2a6cc0" stroke-width="2.5"/><path d="M30,32 Q38,22 44,28" fill="none" stroke="#2e9a3a" stroke-width="2.5"/><path d="M6,10 H30 M4,18 H36 M4,26 H20" stroke="#6aa0d8" stroke-width="1"/></svg></g><g transform="translate(76,28) rotate(-1)"><rect x="-28.0" y="-35.5" width="56" height="71" fill="#9c9080" opacity="0.35"/><rect x="-27.5" y="-35.0" width="55" height="70" fill="#fbfbfa"/><svg x="-24.5" y="-32.0" width="49" height="51.1" viewBox="0 0 49 51.1" preserveAspectRatio="none"><rect width="100%" height="100%" fill="#dad9d4"/><g stroke="#e8c22a" stroke-width="2.5"><line x1="10" y1="10" x2="50" y2="4"/><line x1="10" y1="10" x2="50" y2="18"/><line x1="10" y1="10" x2="46" y2="36"/><line x1="10" y1="10" x2="28" y2="46"/><line x1="10" y1="10" x2="12" y2="46"/><line x1="10" y1="10" x2="36" y2="46"/></g><circle cx="10" cy="10" r="7" fill="#e8a030" stroke="#e87a20" stroke-width="2"/><path d="M36,4 Q42,14 50,10" fill="none" stroke="#3d8ad0" stroke-width="2"/><path d="M28,34 H48 M32,40 H50" stroke="#d04040" stroke-width="1"/></svg></g><g transform="translate(131,40) rotate(3)"><rect x="-30.5" y="-34.0" width="61" height="68" fill="#9c9080" opacity="0.35"/><rect x="-30.0" y="-33.5" width="60" height="67" fill="#fbfbfa"/><svg x="-27.0" y="-30.5" width="54" height="48.239999999999995" viewBox="0 0 54 48.239999999999995" preserveAspectRatio="none"><rect width="100%" height="100%" fill="#dad9d4"/><text x="4" y="12" font-family="Liberation Sans" font-weight="700" font-size="11" fill="#e0b828">JUNT</text><text x="10" y="32" font-family="Liberation Sans" font-weight="700" font-size="18" fill="#d8282a">T@</text><path d="M46,14 Q52,24 44,40" fill="none" stroke="#4a5fa8" stroke-width="3"/><path d="M6,40 H36 M6,46 H30" stroke="#b0a8a8" stroke-width="1"/></svg></g><g transform="translate(181,39) rotate(6)"><rect x="-21.5" y="-36.5" width="43" height="73" fill="#9c9080" opacity="0.35"/><rect x="-21.0" y="-36.0" width="42" height="72" fill="#fbfbfa"/><svg x="-18.0" y="-33.0" width="36" height="57.6" viewBox="0 0 36 57.6" preserveAspectRatio="none"><rect width="100%" height="100%" fill="#dedbd8"/><g fill="none" stroke-width="3"><path d="M2,8 Q14,2 22,10 Q30,18 36,6" stroke="#c83030"/><path d="M4,22 Q16,16 28,28" stroke="#2855b0"/><path d="M2,34 Q18,40 34,30" stroke="#d03030"/><path d="M6,46 Q20,40 36,50" stroke="#2e60c0"/><path d="M10,14 Q20,30 12,44" stroke="#303a60"/></g></svg></g><g transform="translate(234,22) rotate(-4)"><rect x="-30.5" y="-26.5" width="61" height="53" fill="#9c9080" opacity="0.35"/><rect x="-30.0" y="-26.0" width="60" height="52" fill="#fbfbfa"/><svg x="-27.0" y="-23.0" width="54" height="49.4" viewBox="0 0 54 49.4" preserveAspectRatio="none"><rect width="100%" height="100%" fill="#d8d7d3"/><text x="22" y="30" font-family="Liberation Sans" font-weight="700" font-size="8" fill="#2c8a2c">QUALITY</text><path d="M2,12 H20 M2,22 H20 M2,36 H30 M2,42 H40" stroke="#2a5a2a" stroke-width="2"/><circle cx="48" cy="8" r="6" fill="#d82020"/><path d="M34,4 L38,12 L32,10 Z" fill="#e8d020"/></svg></g><g transform="translate(236,63) rotate(-26)"><rect x="-27.5" y="-26.5" width="55" height="53" fill="#9c9080" opacity="0.35"/><rect x="-27.0" y="-26.0" width="54" height="52" fill="#fbfbfa"/><svg x="-24.0" y="-23.0" width="48" height="45.76" viewBox="0 0 48 45.76" preserveAspectRatio="none"><rect width="100%" height="100%" fill="#dad9d4"/><rect width="100%" height="100%" fill="#d8d4c4"/><circle cx="28" cy="24" r="24" fill="#e6c848"/><circle cx="28" cy="24" r="20" fill="none" stroke="#d03030" stroke-width="3"/><circle cx="28" cy="24" r="14" fill="none" stroke="#2a8a30" stroke-width="3"/><circle cx="28" cy="24" r="8" fill="none" stroke="#3050b0" stroke-width="3"/><circle cx="28" cy="24" r="3" fill="#d03030"/><path d="M2,40 Q10,48 4,6" stroke="#58a040" stroke-width="4" fill="none"/></svg></g><g transform="translate(32.5,101.5) rotate(-2)"><rect x="-31.5" y="-33.0" width="63" height="66" fill="#9c9080" opacity="0.35"/><rect x="-31.0" y="-32.5" width="62" height="65" fill="#fbfbfa"/><svg x="-28.0" y="-29.5" width="56" height="46.8" viewBox="0 0 56 46.8" preserveAspectRatio="none"><rect width="100%" height="100%" fill="#dad9d4"/><text x="2" y="38" font-family="Liberation Sans" font-weight="700" font-size="13" fill="#2a80d0" textLength="54" lengthAdjust="spacingAndGlyphs">NCLUSIÓN</text><path d="M10,6 L18,14 L10,24 L4,14 Z" fill="#c02828"/><path d="M24,6 H50 M24,12 H52 M24,18 H50 M24,24 H48" stroke="#7088b8" stroke-width="1"/></svg></g><g transform="translate(232,123) rotate(8)"><rect x="-29.5" y="-31.5" width="59" height="63" fill="#9c9080" opacity="0.35"/><rect x="-29.0" y="-31.0" width="58" height="62" fill="#fbfbfa"/><svg x="-26.0" y="-28.0" width="52" height="49.6" viewBox="0 0 52 49.6" preserveAspectRatio="none"><rect width="100%" height="100%" fill="#dad9d4"/><rect width="100%" height="100%" fill="#3a80d0"/><path d="M0,0 H60 V6 L0,16 Z" fill="#e08a30"/><path d="M0,30 Q20,26 40,36 H60 V50 H0 Z" fill="#a07050"/><path d="M20,50 Q30,34 60,36 V50 Z" fill="#38b050"/><rect x="40" y="14" width="10" height="28" fill="#f0f0f0"/><path d="M40,20 H50 M40,28 H50 M40,36 H50" stroke="#d03030" stroke-width="3"/></svg></g><g transform="translate(67,81)"><rect x="0" y="0" width="129" height="48" fill="#f3f4f5"/><line x1="0" y1="0" x2="0" y2="48" stroke="#c8ccd0" stroke-width="0.4"/><line x1="6" y1="0" x2="6" y2="48" stroke="#c8ccd0" stroke-width="0.4"/><line x1="12" y1="0" x2="12" y2="48" stroke="#c8ccd0" stroke-width="0.4"/><line x1="18" y1="0" x2="18" y2="48" stroke="#c8ccd0" stroke-width="0.4"/><line x1="24" y1="0" x2="24" y2="48" stroke="#c8ccd0" stroke-width="0.4"/><line x1="30" y1="0" x2="30" y2="48" stroke="#c8ccd0" stroke-width="0.4"/><line x1="36" y1="0" x2="36" y2="48" stroke="#c8ccd0" stroke-width="0.4"/><line x1="42" y1="0" x2="42" y2="48" stroke="#c8ccd0" stroke-width="0.4"/><line x1="48" y1="0" x2="48" y2="48" stroke="#c8ccd0" stroke-width="0.4"/><line x1="54" y1="0" x2="54" y2="48" stroke="#c8ccd0" stroke-width="0.4"/><line x1="60" y1="0" x2="60" y2="48" stroke="#c8ccd0" stroke-width="0.4"/><line x1="66" y1="0" x2="66" y2="48" stroke="#c8ccd0" stroke-width="0.4"/><line x1="72" y1="0" x2="72" y2="48" stroke="#c8ccd0" stroke-width="0.4"/><line x1="78" y1="0" x2="78" y2="48" stroke="#c8ccd0" stroke-width="0.4"/><line x1="84" y1="0" x2="84" y2="48" stroke="#c8ccd0" stroke-width="0.4"/><line x1="90" y1="0" x2="90" y2="48" stroke="#c8ccd0" stroke-width="0.4"/><line x1="96" y1="0" x2="96" y2="48" stroke="#c8ccd0" stroke-width="0.4"/><line x1="102" y1="0" x2="102" y2="48" stroke="#c8ccd0" stroke-width="0.4"/><line x1="108" y1="0" x2="108" y2="48" stroke="#c8ccd0" stroke-width="0.4"/><line x1="114" y1="0" x2="114" y2="48" stroke="#c8ccd0" stroke-width="0.4"/><line x1="120" y1="0" x2="120" y2="48" stroke="#c8ccd0" stroke-width="0.4"/><line x1="126" y1="0" x2="126" y2="48" stroke="#c8ccd0" stroke-width="0.4"/><line x1="0" y1="0" x2="130" y2="0" stroke="#c8ccd0" stroke-width="0.4"/><line x1="0" y1="6" x2="130" y2="6" stroke="#c8ccd0" stroke-width="0.4"/><line x1="0" y1="12" x2="130" y2="12" stroke="#c8ccd0" stroke-width="0.4"/><line x1="0" y1="18" x2="130" y2="18" stroke="#c8ccd0" stroke-width="0.4"/><line x1="0" y1="24" x2="130" y2="24" stroke="#c8ccd0" stroke-width="0.4"/><line x1="0" y1="30" x2="130" y2="30" stroke="#c8ccd0" stroke-width="0.4"/><line x1="0" y1="36" x2="130" y2="36" stroke="#c8ccd0" stroke-width="0.4"/><line x1="0" y1="42" x2="130" y2="42" stroke="#c8ccd0" stroke-width="0.4"/><line x1="0" y1="48" x2="130" y2="48" stroke="#c8ccd0" stroke-width="0.4"/><text x="10" y="22" font-family="Liberation Sans" font-weight="700" font-size="8" fill="#4e9a3e">UAM</text><text x="4" y="28" font-family="Liberation Sans" font-size="3" fill="#3d88d0">Universidad Autónoma</text><text x="52" y="15" font-family="Liberation Sans" font-size="9" fill="#333" textLength="74" lengthAdjust="spacingAndGlyphs">Área de Atención</text><text x="60" y="30" font-family="Liberation Sans" font-size="9" fill="#333" textLength="60" lengthAdjust="spacingAndGlyphs">a la Diversidad</text><text x="70" y="44" font-family="Liberation Sans" font-size="9" fill="#333" textLength="40" lengthAdjust="spacingAndGlyphs">Funcional</text></g><g transform="translate(24,163) rotate(-12)"><rect x="-24.5" y="-34.5" width="49" height="69" fill="#9c9080" opacity="0.35"/><rect x="-24.0" y="-34.0" width="48" height="68" fill="#fbfbfa"/><svg x="-21.0" y="-31.0" width="42" height="53.04" viewBox="0 0 42 53.04" preserveAspectRatio="none"><rect width="100%" height="100%" fill="#dad9d4"/><rect width="100%" height="100%" fill="#d6d5d2"/><path d="M20,60 Q22,40 18,20 M20,40 Q30,30 36,20 M20,36 Q10,26 6,16" stroke="#b86a50" stroke-width="3" fill="none"/><circle cx="6" cy="8" r="1.8" fill="#d03030"/><circle cx="14" cy="12" r="1.8" fill="#30a040"/><circle cx="26" cy="8" r="1.8" fill="#3070c0"/><circle cx="34" cy="14" r="1.8" fill="#d03030"/><circle cx="40" cy="24" r="1.8" fill="#30a040"/><circle cx="8" cy="30" r="1.8" fill="#3070c0"/><circle cx="30" cy="36" r="1.8" fill="#d03030"/><circle cx="40" cy="40" r="1.8" fill="#3070c0"/><circle cx="6" cy="44" r="1.8" fill="#30a040"/></svg></g><g transform="translate(68,177) rotate(-2)"><rect x="-31.0" y="-30.0" width="62" height="60" fill="#9c9080" opacity="0.35"/><rect x="-30.5" y="-29.5" width="61" height="59" fill="#fbfbfa"/><svg x="-27.5" y="-26.5" width="55" height="50.74" viewBox="0 0 55 50.74" preserveAspectRatio="none"><rect width="100%" height="100%" fill="#dcdcda"/><path d="M0,4 H56 M0,18 Q20,30 30,20 Q40,14 56,16" stroke="#2a8a30" stroke-width="2.5" fill="none"/><rect x="2" y="30" width="26" height="20" fill="none" stroke="#1e5a24" stroke-width="2.5"/><text x="2" y="14" font-family="Liberation Sans" font-size="7" fill="#d04848">TODOS a la</text><path d="M46,40 Q40,34 44,32 Q48,30 48,34 Q50,30 53,32 Q56,36 48,44 Z" fill="#d82424"/><path d="M34,24 H52 M34,32 H50" stroke="#5090d0" stroke-width="1.5"/></svg></g><g transform="translate(129,172) rotate(10)"><rect x="-29.5" y="-36.5" width="59" height="73" fill="#9c9080" opacity="0.35"/><rect x="-29.0" y="-36.0" width="58" height="72" fill="#fbfbfa"/><svg x="-26.0" y="-33.0" width="52" height="56.160000000000004" viewBox="0 0 52 56.160000000000004" preserveAspectRatio="none"><rect width="100%" height="100%" fill="#dad9d4"/><rect width="100%" height="100%" fill="#d9d0a0"/><circle cx="28" cy="28" r="26" fill="#d8c030"/><circle cx="28" cy="28" r="16" fill="#7a6a80"/><circle cx="28" cy="28" r="10" fill="#d83030"/></svg></g><g transform="translate(180,170) rotate(-30)"><rect x="-25.5" y="-34.5" width="51" height="69" fill="#9c9080" opacity="0.35"/><rect x="-25.0" y="-34.0" width="50" height="68" fill="#fbfbfa"/><svg x="-22.0" y="-31.0" width="44" height="57.8" viewBox="0 0 44 57.8" preserveAspectRatio="none"><rect width="100%" height="100%" fill="#dad9d4"/><rect width="100%" height="100%" fill="#d2d2d0"/><rect x="0" y="12" width="60" height="12" fill="#c8a030"/><path d="M0,16 Q10,12 20,20 Q30,12 40,20 Q50,14 60,18" stroke="#3a7a30" stroke-width="3" fill="none"/><rect x="0" y="32" width="60" height="12" fill="#d08030"/><path d="M0,36 Q10,42 20,34 Q30,40 40,34 Q50,40 60,36" stroke="#3050a0" stroke-width="3" fill="none"/></svg></g><g transform="translate(233,178) rotate(8)"><rect x="-29.5" y="-31.5" width="59" height="63" fill="#9c9080" opacity="0.35"/><rect x="-29.0" y="-31.0" width="58" height="62" fill="#fbfbfa"/><svg x="-26.0" y="-28.0" width="52" height="55.800000000000004" viewBox="0 0 52 55.800000000000004" preserveAspectRatio="none"><rect width="100%" height="100%" fill="#dddcd8"/><circle cx="12" cy="8" r="6" fill="none" stroke="#d82424" stroke-width="2"/><text x="2" y="28" font-family="Liberation Sans" font-weight="700" font-size="12" fill="#d03030" textLength="44" lengthAdjust="spacingAndGlyphs">ODOS</text><text x="0" y="44" font-family="Liberation Sans" font-weight="700" font-size="13" fill="#3060c0" textLength="48" lengthAdjust="spacingAndGlyphs">OMOS</text><path d="M30,6 H44 M34,14 H50" stroke="#3060c0" stroke-width="2"/></svg></g></g></svg>
<div class="t" style="left:173.0px;top:17.00px;font-size:15px;line-height:18.0px;font-weight:400;color:#ffffff;letter-spacing:-0.254px;">Curso</div>
<div class="t" style="left:244.0px;top:16.00px;font-size:15px;line-height:18.0px;font-weight:700;color:#ffffff;transform:scaleX(0.9767);transform-origin:0 0;">Taller</div>
<div class="t" style="left:314.0px;top:17.00px;font-size:15px;line-height:18.0px;font-weight:400;color:#ffffff;letter-spacing:0.036px;">Configuración</div>
<div class="t" style="left:439.0px;top:17.00px;font-size:15px;line-height:18.0px;font-weight:400;color:#ffffff;letter-spacing:-0.018px;">Formulario de evaluación</div>
<div class="t" style="left:639.0px;top:17.00px;font-size:15px;line-height:18.0px;font-weight:400;color:#ffffff;letter-spacing:-0.085px;">Asignación de envíos</div>
<div class="t" style="left:813.0px;top:17.00px;font-size:15px;line-height:18.0px;font-weight:400;color:#ffffff;letter-spacing:0.078px;">Más</div>
<div class="t" style="left:38.2px;top:134.00px;font-size:15px;line-height:18.0px;font-weight:700;color:#3c4043;transform:scaleX(0.9217);transform-origin:0 0;">General</div>
<div class="t" style="left:41.8px;top:174.50px;font-size:15px;line-height:18.0px;font-weight:400;color:#495057;letter-spacing:-0.124px;">Avisos</div>
<div class="t" style="left:41.8px;top:215.00px;font-size:15px;line-height:18.0px;font-weight:400;color:#495057;letter-spacing:0.036px;">Asistencia</div>
<div class="t" style="left:41.8px;top:255.50px;font-size:15px;line-height:18.0px;font-weight:400;color:#495057;letter-spacing:-0.089px;">Wiki del curso</div>
<div class="t" style="left:38.2px;top:296.00px;font-size:15px;line-height:18.0px;font-weight:700;color:#3c4043;transform:scaleX(0.9527);transform-origin:0 0;">Tema 1</div>
<div class="t" style="left:38.2px;top:336.50px;font-size:15px;line-height:18.0px;font-weight:700;color:#3c4043;transform:scaleX(0.9744);transform-origin:0 0;">Tema 2</div>
<div class="t" style="left:38.2px;top:377.00px;font-size:15px;line-height:18.0px;font-weight:700;color:#3c4043;transform:scaleX(0.9744);transform-origin:0 0;">Tema 3</div>
<div class="t" style="left:38.2px;top:417.50px;font-size:15px;line-height:18.0px;font-weight:700;color:#3c4043;transform:scaleX(0.9744);transform-origin:0 0;">Tema 4</div>
<div class="t" style="left:41.8px;top:458.00px;font-size:15px;line-height:18.0px;font-weight:400;color:#495057;letter-spacing:-0.142px;">Ejemplo de Lección</div>
<div class="t" style="left:41.8px;top:498.50px;font-size:15px;line-height:18.0px;font-weight:400;color:#ffffff;letter-spacing:-0.063px;">Taller de ejemplo</div>
<div class="t" style="left:38.2px;top:539.00px;font-size:15px;line-height:18.0px;font-weight:700;color:#3c4043;transform:scaleX(0.9402);transform-origin:0 0;">Itinerario secuencial</div>
<div class="t" style="left:38.2px;top:579.50px;font-size:15px;line-height:18.0px;font-weight:700;color:#3c4043;transform:scaleX(0.9373);transform-origin:0 0;">Itinerario ramificado por decisió...</div>
<div class="t" style="left:38.2px;top:620.00px;font-size:15px;line-height:18.0px;font-weight:700;color:#3c4043;transform:scaleX(0.9370);transform-origin:0 0;">Itinerario modular</div>
<div class="t" style="left:1165.6px;top:114.80px;font-size:15px;line-height:18.0px;font-weight:400;color:#4c772c;letter-spacing:-0.292px;">Curso pruebaS</div>
<div class="t" style="left:1289.4px;top:114.80px;font-size:15px;line-height:18.0px;font-weight:400;color:#4c772c;letter-spacing:-0.121px;">Tema 4</div>
<div class="t" style="left:1364.6px;top:114.80px;font-size:15px;line-height:18.0px;font-weight:400;color:#1d2125;letter-spacing:-0.050px;">Taller de ejemplo</div>
<div class="t" style="left:396.0px;top:129.91px;font-size:32px;line-height:38.4px;font-weight:700;color:#1d2125;transform:scaleX(0.8894);transform-origin:0 0;">Taller de ejemplo</div>
<div class="t" style="left:391.0px;top:225.12px;font-size:26.5px;line-height:31.8px;font-weight:700;color:#1d2125;transform:scaleX(0.9292);transform-origin:0 0;">Ajustes de la evaluación de las calificaciones</div>
<div class="t" style="left:364.4px;top:277.30px;font-size:15px;line-height:18.0px;font-weight:400;color:#1d2125;letter-spacing:-0.084px;">Comparación de evaluaciones</div>
<div class="t" style="left:658.0px;top:277.30px;font-size:15px;line-height:18.0px;font-weight:400;color:#495057;">justa</div>
<div class="t" style="left:658.6px;top:331.00px;font-size:15px;line-height:18.0px;font-weight:400;color:#ffffff;">Recalcular las calificaciones</div>
<div class="t" style="left:339.0px;top:382.13px;font-size:30.5px;line-height:36.6px;font-weight:700;color:#1d2125;transform:scaleX(0.9224);transform-origin:0 0;">Fase de calificación de evaluaciones</div>
<div class="t" style="left:343.4px;top:436.75px;font-size:12.2px;line-height:14.64px;font-weight:700;color:#3d4246;transform:scaleX(0.9106);transform-origin:0 0;">Fase de configuración</div>
<div class="t" style="left:343.4px;top:454.66px;font-size:10.4px;line-height:12.48px;font-weight:700;color:#4c772c;transform:scaleX(0.9037);transform-origin:0 0;text-decoration:underline;text-underline-offset:1px;">Cambiar a la fase de configuración</div>
<div class="t" style="left:581.8px;top:436.75px;font-size:12.2px;line-height:14.64px;font-weight:700;color:#3d4246;transform:scaleX(0.9081);transform-origin:0 0;">Fase de envío</div>
<div class="t" style="left:581.8px;top:454.66px;font-size:10.4px;line-height:12.48px;font-weight:700;color:#4c772c;transform:scaleX(0.9078);transform-origin:0 0;text-decoration:underline;text-underline-offset:1px;">Cambiar a la fase de envío</div>
<div class="t" style="left:820.5px;top:436.75px;font-size:12.2px;line-height:14.64px;font-weight:700;color:#3d4246;transform:scaleX(0.9170);transform-origin:0 0;">Fase de evaluación</div>
<div class="t" style="left:820.5px;top:454.66px;font-size:10.4px;line-height:12.48px;font-weight:700;color:#4c772c;transform:scaleX(0.9052);transform-origin:0 0;text-decoration:underline;text-underline-offset:1px;">Cambiar a la fase de evaluación</div>
<div class="t" style="left:1297.5px;top:436.75px;font-size:12.2px;line-height:14.64px;font-weight:700;color:#3d4246;transform:scaleX(0.9180);transform-origin:0 0;">Cerrado</div>
<div class="t" style="left:1297.5px;top:454.66px;font-size:10.4px;line-height:12.48px;font-weight:700;color:#4c772c;transform:scaleX(0.9012);transform-origin:0 0;text-decoration:underline;text-underline-offset:1px;">Cerrar taller</div>
<div class="t" style="left:1060.0px;top:437.48px;font-size:16.5px;line-height:19.8px;font-weight:700;color:#1d2125;transform:scaleX(0.9541);transform-origin:0 0;">Fase de calificación de</div>
<div class="t" style="left:1060.0px;top:462.28px;font-size:16.5px;line-height:19.8px;font-weight:700;color:#1d2125;transform:scaleX(0.9488);transform-origin:0 0;">evaluaciones</div>
<div class="t" style="left:1060.0px;top:487.22px;font-size:9.7px;line-height:11.64px;font-weight:700;color:#1d2125;transform:scaleX(0.9530);transform-origin:0 0;">Fase actual</div>
<div class="t" style="left:365.3px;top:514.24px;font-size:12px;line-height:14.4px;font-weight:400;color:#2f3337;letter-spacing:-0.016px;text-decoration:underline;text-underline-offset:1px;">Defina la descripción del taller</div>
<div class="t" style="left:365.3px;top:535.84px;font-size:12px;line-height:14.4px;font-weight:400;color:#2f3337;text-decoration:underline;text-underline-offset:1px;">Proporcione instrucciones para el</div>
<div class="t" style="left:365.3px;top:553.74px;font-size:12px;line-height:14.4px;font-weight:400;color:#2f3337;letter-spacing:-0.190px;text-decoration:underline;text-underline-offset:1px;">envío</div>
<div class="t" style="left:365.3px;top:574.84px;font-size:12px;line-height:14.4px;font-weight:400;color:#2f3337;letter-spacing:0.036px;text-decoration:underline;text-underline-offset:1px;">Editar formulario de evaluación</div>
<div class="t" style="left:603.4px;top:514.24px;font-size:12px;line-height:14.4px;font-weight:400;color:#2f3337;letter-spacing:0.025px;text-decoration:underline;text-underline-offset:1px;">Proporcione instrucciones para la</div>
<div class="t" style="left:603.4px;top:532.04px;font-size:12px;line-height:14.4px;font-weight:400;color:#2f3337;letter-spacing:-0.019px;text-decoration:underline;text-underline-offset:1px;">evaluación</div>
<div class="t" style="left:603.4px;top:552.44px;font-size:12px;line-height:14.4px;font-weight:400;color:#2f3337;letter-spacing:-0.038px;text-decoration:underline;text-underline-offset:1px;">Asignar envíos</div>
<div class="t" style="left:608.3px;top:569.03px;font-size:10px;line-height:12.0px;font-weight:400;color:#2f3337;letter-spacing:-0.233px;">esperado: 4</div>
<div class="t" style="left:608.3px;top:583.93px;font-size:10px;line-height:12.0px;font-weight:400;color:#2f3337;letter-spacing:-0.239px;">presentado: 3</div>
<div class="t" style="left:608.3px;top:597.93px;font-size:10px;line-height:12.0px;font-weight:400;color:#2f3337;letter-spacing:-0.208px;">para asignar: 0</div>
<div class="t" style="left:603.4px;top:616.04px;font-size:12px;line-height:14.4px;font-weight:400;color:#2f3337;letter-spacing:-0.044px;">Al menos un autor aún no ha enviado</div>
<div class="t" style="left:603.4px;top:633.84px;font-size:12px;line-height:14.4px;font-weight:400;color:#2f3337;letter-spacing:0.055px;">su trabajo</div>
<div class="t" style="left:1082.0px;top:512.74px;font-size:12px;line-height:14.4px;font-weight:400;color:#2f3337;letter-spacing:-0.025px;">Calcular calificaciones de envíos</div>
<div class="t" style="left:1087.0px;top:530.13px;font-size:10px;line-height:12.0px;font-weight:400;color:#2f3337;letter-spacing:-0.293px;">esperadas: 4</div>
<div class="t" style="left:1087.0px;top:543.84px;font-size:10px;line-height:12.0px;font-weight:400;color:#2f3337;letter-spacing:-0.206px;">calculadas: 0</div>
<div class="t" style="left:1082.0px;top:561.74px;font-size:12px;line-height:14.4px;font-weight:400;color:#2f3337;">Calcular calificaciones de evaluación</div>
<div class="t" style="left:1087.0px;top:579.34px;font-size:10px;line-height:12.0px;font-weight:400;color:#2f3337;letter-spacing:-0.293px;">esperadas: 4</div>
<div class="t" style="left:1087.0px;top:593.13px;font-size:10px;line-height:12.0px;font-weight:400;color:#2f3337;letter-spacing:-0.206px;">calculadas: 0</div>
<div class="t" style="left:1082.0px;top:611.04px;font-size:12px;line-height:14.4px;font-weight:400;color:#2f3337;letter-spacing:-0.014px;text-decoration:underline;text-underline-offset:1px;">Proporcionar una conclusión de la</div>
<div class="t" style="left:1082.0px;top:628.84px;font-size:12px;line-height:14.4px;font-weight:400;color:#2f3337;letter-spacing:0.078px;text-decoration:underline;text-underline-offset:1px;">actividad</div>
<div class="t" style="left:1082.0px;top:650.44px;font-size:12px;line-height:14.4px;font-weight:400;color:#2f3337;letter-spacing:-0.028px;text-decoration:underline;text-underline-offset:1px;">Cambiar a la siguiente fase</div>
<div class="t" style="left:339.5px;top:732.00px;font-size:15px;line-height:18.0px;font-weight:400;color:#1d2125;">Método de evaluación de calificaciones</div>
<div class="t" style="left:643.8px;top:736.00px;font-size:15px;line-height:18.0px;font-weight:400;color:#495057;letter-spacing:-0.037px;">Comparación con la mejor evaluación</div>
<div class="t" style="left:339.0px;top:795.68px;font-size:18.3px;line-height:21.96px;font-weight:700;color:#4c772c;transform:scaleX(0.9343);transform-origin:0 0;text-decoration:underline;text-underline-offset:1px;text-decoration-thickness:1px;">Informe de calificaciones del Taller </div>
<div class="t" style="left:1612.0px;top:138.25px;font-size:18.75px;line-height:22.5px;font-weight:700;color:#1d2125;transform:scaleX(0.9321);transform-origin:0 0;">Encuestas de actividad</div>
<div class="t" style="left:1612.0px;top:162.15px;font-size:18.75px;line-height:22.5px;font-weight:700;color:#1d2125;transform:scaleX(0.9883);transform-origin:0 0;">docente 2025/26</div>
<div class="t" style="left:1612.0px;top:525.95px;font-size:18.75px;line-height:22.5px;font-weight:700;color:#1d2125;transform:scaleX(0.9318);transform-origin:0 0;">Atención a la diversidad</div>
<div class="t" style="left:1612.0px;top:549.05px;font-size:18.75px;line-height:22.5px;font-weight:700;color:#1d2125;transform:scaleX(0.9280);transform-origin:0 0;">funcional</div>
</body></html>
